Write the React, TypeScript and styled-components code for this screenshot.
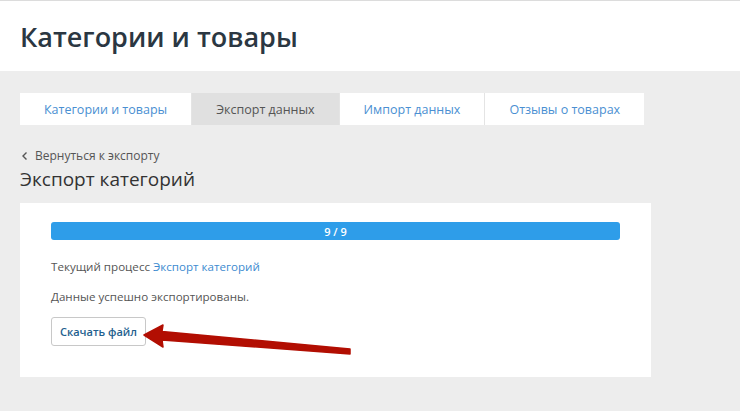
import { FC } from 'react'
import { createGlobalStyle, styled } from 'styled-components'

const GlobalStyle = createGlobalStyle`
  html, body {
    margin: 0;
    padding: 0;
    background: #ededed;
    font-family: "Open Sans", "Noto Sans", sans-serif;
  }
`

const Header = styled.header`
  height: 70px;
  border-top: 1px solid #dcdcdc;
  background: #fff;
  display: flex;
  align-items: center;
  padding-left: 20px;
`

const Title = styled.h1`
  margin: 0;
  font-size: 27px;
  font-weight: 600;
  color: #2b3742;
`

const Main = styled.main`
  padding: 22px 20px 34px;
  background: #ededed;
`

const Tabs = styled.nav`
  display: flex;
  width: fit-content;
  height: 32px;
`

const Tab = styled.a<{ $active?: boolean }>`
  display: flex;
  align-items: center;
  padding: 0 24px;
  font-size: 12.5px;
  text-decoration: none;
  color: ${({ $active }) => ($active ? '#555' : '#4a8fd2')};
  background: ${({ $active }) => ($active ? '#e0e0e0' : '#fff')};
  & + & {
    border-left: 1px solid #e4e4e4;
  }
`

const BackLink = styled.a`
  display: flex;
  align-items: center;
  gap: 5px;
  margin-top: 23px;
  font-size: 12px;
  color: #555;
  text-decoration: none;
  line-height: 16px;
`

const Heading = styled.h2`
  margin: 2px 0 11px;
  font-size: 19px;
  font-weight: 400;
  color: #333;
  line-height: 26px;
`

const Card = styled.section`
  position: relative;
  width: 631px;
  box-sizing: border-box;
  background: #fff;
  padding: 19px 31px 31px;
`

const Progress = styled.div`
  height: 18px;
  border-radius: 3px;
  background: #2e9de9;
  color: #fff;
  font-size: 11px;
  font-weight: 600;
  display: flex;
  align-items: center;
  justify-content: center;
`

const Line = styled.p`
  margin: 0;
  font-size: 11.6px;
  line-height: 16px;
  color: #555;
  margin-top: 19px;
  & + & {
    margin-top: 14px;
  }
`

const Link = styled.a`
  color: #3d8bd0;
  text-decoration: none;
`

const Button = styled.button`
  margin-top: 12px;
  height: 29px;
  width: 95px;
  padding: 0;
  border: 1px solid #c8c8c8;
  border-radius: 3px;
  background: #fff;
  color: #1e5f8e;
  font-family: inherit;
  font-size: 11px;
  font-weight: 600;
`

const Arrow = styled.svg`
  position: absolute;
  left: 0;
  top: 0;
  pointer-events: none;
`

const tabs = ['Категории и товары', 'Экспорт данных', 'Импорт данных', 'Отзывы о товарах']

const App: FC = () => (
  <>
    <GlobalStyle />
    <Header>
      <Title>Категории и товары</Title>
    </Header>
    <Main>
      <Tabs>
        {tabs.map((t, i) => (
          <Tab key={t} $active={i === 1}>
            {t}
          </Tab>
        ))}
      </Tabs>
      <BackLink>
        <svg width="10" height="10" viewBox="0 0 10 10">
          <path d="M6.5 1.5 L3 5 L6.5 8.5" fill="none" stroke="#555" strokeWidth="1.4" />
        </svg>
        Вернуться к экспорту
      </BackLink>
      <Heading>Экспорт категорий</Heading>
      <Card>
        <Progress>9 / 9</Progress>
        <Line>
          Текущий процесс <Link>Экспорт категорий</Link>
        </Line>
        <Line>Данные успешно экспортированы.</Line>
        <Button>Скачать файл</Button>
        <Arrow width="631" height="174" viewBox="0 0 631 174">
          <path
            d="M124 132 L143 122 L142 128.5 L330 146 L330 151 L142 137 L143 144 Z"
            fill="#b20e02"
            stroke="#b20e02"
            strokeWidth="1.5"
            strokeLinejoin="round"
          />
        </Arrow>
      </Card>
    </Main>
  </>
)

export default App
